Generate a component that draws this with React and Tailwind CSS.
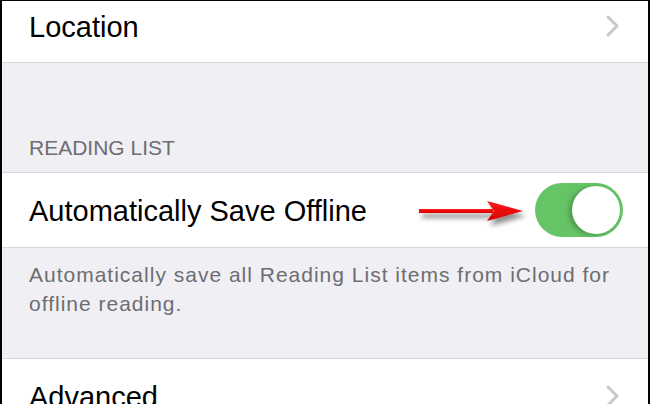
import React from 'react';

function Chevron() {
  return (
    <svg width="13" height="22" viewBox="0 0 13 22" className="shrink-0">
      <polyline points="2,2 11,11 2,20" fill="none" stroke="#c7c7cc" strokeWidth="3" strokeLinecap="round" strokeLinejoin="round" />
    </svg>
  );
}

function Arrow() {
  return (
    <svg width="112" height="40" viewBox="0 0 112 40" className="shrink-0">
      <defs>
        <filter id="arrowShadow" x="-20%" y="-50%" width="140%" height="200%">
          <feDropShadow dx="3" dy="5" stdDeviation="2.5" floodColor="#000" floodOpacity="0.45" />
        </filter>
        <linearGradient id="arrowRed" x1="0" y1="0" x2="0" y2="1">
          <stop offset="0" stopColor="#ff1a1a" />
          <stop offset="1" stopColor="#d40000" />
        </linearGradient>
      </defs>
      <g filter="url(#arrowShadow)" fill="url(#arrowRed)">
        <rect x="2" y="18" width="74" height="4" />
        <path d="M70 10 L106 20 L70 30 L77 20 Z" />
      </g>
    </svg>
  );
}

function Toggle() {
  return (
    <div className="relative h-[54px] w-[88px] shrink-0 rounded-full bg-[#65c466]">
      <div className="absolute right-[3px] top-[3px] h-[48px] w-[48px] rounded-full bg-white shadow-[-3px_1px_5px_rgba(0,0,0,0.25)]" />
    </div>
  );
}

export default function App() {
  return (
    <div className="h-[404px] w-[650px] overflow-hidden border-t border-x-2 border-black bg-[#efeff4] font-['Liberation_Sans',Arial,sans-serif]">
      <div className="flex h-[62px] items-start justify-between border-b border-[#d8d8dc] bg-white pl-[27px] pr-[29px]">
        <span className="pt-[9px] text-[29px] leading-[34px] text-black">Location</span>
        <div className="pt-[14px]">
          <Chevron />
        </div>
      </div>

      <div className="h-[109px] pl-[27px] pt-[73px]">
        <span className="text-[21px] leading-[24px] text-[#6d6d72]">READING LIST</span>
      </div>

      <div className="flex h-[76px] items-center border-y border-[#d8d8dc] bg-white pl-[27px] pr-[25px]">
        <span className="pt-[2px] text-[29px] leading-[34px] text-black">Automatically Save Offline</span>
        <div className="ml-auto mr-[6px] pt-[2px]">
          <Arrow />
        </div>
        <Toggle />
      </div>

      <div className="h-[110px] pl-[27px] pr-[20px] pt-[12px]">
        <p className="text-[21px] leading-[29px] tracking-[1px] text-[#6d6d72]">
          Automatically save all Reading List items from iCloud for
          <br />
          offline reading.
        </p>
      </div>

      <div className="flex h-[80px] items-start justify-between border-t border-[#d8d8dc] bg-white pl-[27px] pr-[29px]">
        <span className="pt-[21px] text-[29px] leading-[34px] text-black">Advanced</span>
        <div className="pt-[26px]">
          <Chevron />
        </div>
      </div>
    </div>
  );
}
